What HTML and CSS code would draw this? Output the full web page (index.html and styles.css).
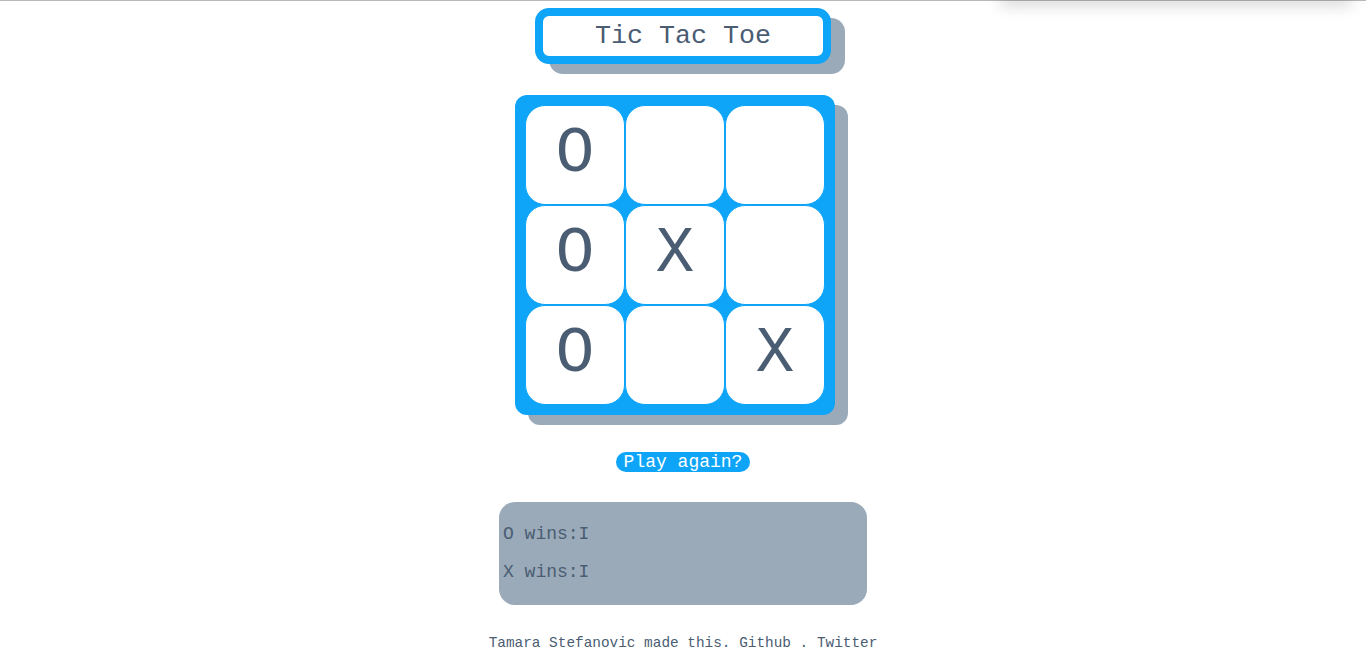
FILE: index.html
```html
<!DOCTYPE html>
<html lang="en">
<head>
<meta charset="utf-8">
<title>Tic Tac Toe</title>
<link rel="stylesheet" href="styles.css">
</head>
<body>
<div class="topline"></div>
<div class="menu-shadow"></div>
<main class="app">
  <h1 class="title">Tic Tac Toe</h1>
  <div class="board">
    <div class="cell">O</div>
    <div class="cell"></div>
    <div class="cell"></div>
    <div class="cell">O</div>
    <div class="cell">X</div>
    <div class="cell"></div>
    <div class="cell">O</div>
    <div class="cell"></div>
    <div class="cell">X</div>
  </div>
  <button class="again">Play again?</button>
  <section class="stats">
    <p>O wins:I</p>
    <p>X wins:I</p>
  </section>
  <footer class="footer">Tamara Stefanovic made this. <a href="#">Github</a> . <a href="#">Twitter</a></footer>
</main>
</body>
</html>
```

FILE: styles.css
```css
html, body {
  background: #ffffff;
}
body {
  margin: 8px;
  font-family: "Liberation Mono", "DejaVu Sans Mono", monospace;
  color: #4a5d73;
}
.topline {
  position: absolute;
  top: 0;
  left: 0;
  right: 0;
  height: 1px;
  background: #b9b9b9;
}
.menu-shadow {
  position: absolute;
  top: -10px;
  left: 1000px;
  width: 352px;
  height: 10px;
  background: #fff;
  box-shadow: 0 4px 16px rgba(0, 0, 0, 0.22);
}
.app {
  display: flex;
  flex-direction: column;
  align-items: center;
}
.title {
  margin: 0;
  width: 280px;
  height: 40px;
  border: 8px solid #0ea5f9;
  border-radius: 14px;
  background: #fff;
  box-shadow: 14px 10px 0 #9aaab9;
  font-weight: normal;
  font-size: 26.67px;
  line-height: 40px;
  text-align: center;
}
.board {
  margin-top: 31px;
  margin-right: 16px;
  display: grid;
  grid-template-columns: repeat(3, 100px);
  grid-template-rows: repeat(3, 100px);
  padding: 10px;
  background: #0ea5f9;
  border-radius: 12px;
  box-shadow: 13px 10px 0 #9aaab9;
}
.cell {
  box-sizing: border-box;
  background: #fff;
  border: 1px solid #0ea5f9;
  border-radius: 20px;
  display: flex;
  align-items: center;
  justify-content: center;
  font-size: 64px;
  line-height: 1;
  padding-bottom: 3px;
}
.again {
  margin-top: 37px;
  font-family: inherit;
  font-size: 18px;
  line-height: 20px;
  height: 20px;
  padding: 0 8px;
  border: none;
  border-radius: 10px;
  background: #0ea5f9;
  color: #fff;
}
.stats {
  margin-top: 30px;
  width: 360px;
  padding: 4px;
  background: #9aaab9;
  border-radius: 16px;
  font-size: 18px;
  display: flow-root;
}
.stats p {
  margin: 18px 0;
  line-height: 20.4px;
}
.footer {
  margin-top: 30px;
  font-size: 14.4px;
}
.footer a {
  color: inherit;
  text-decoration: none;
}
```
